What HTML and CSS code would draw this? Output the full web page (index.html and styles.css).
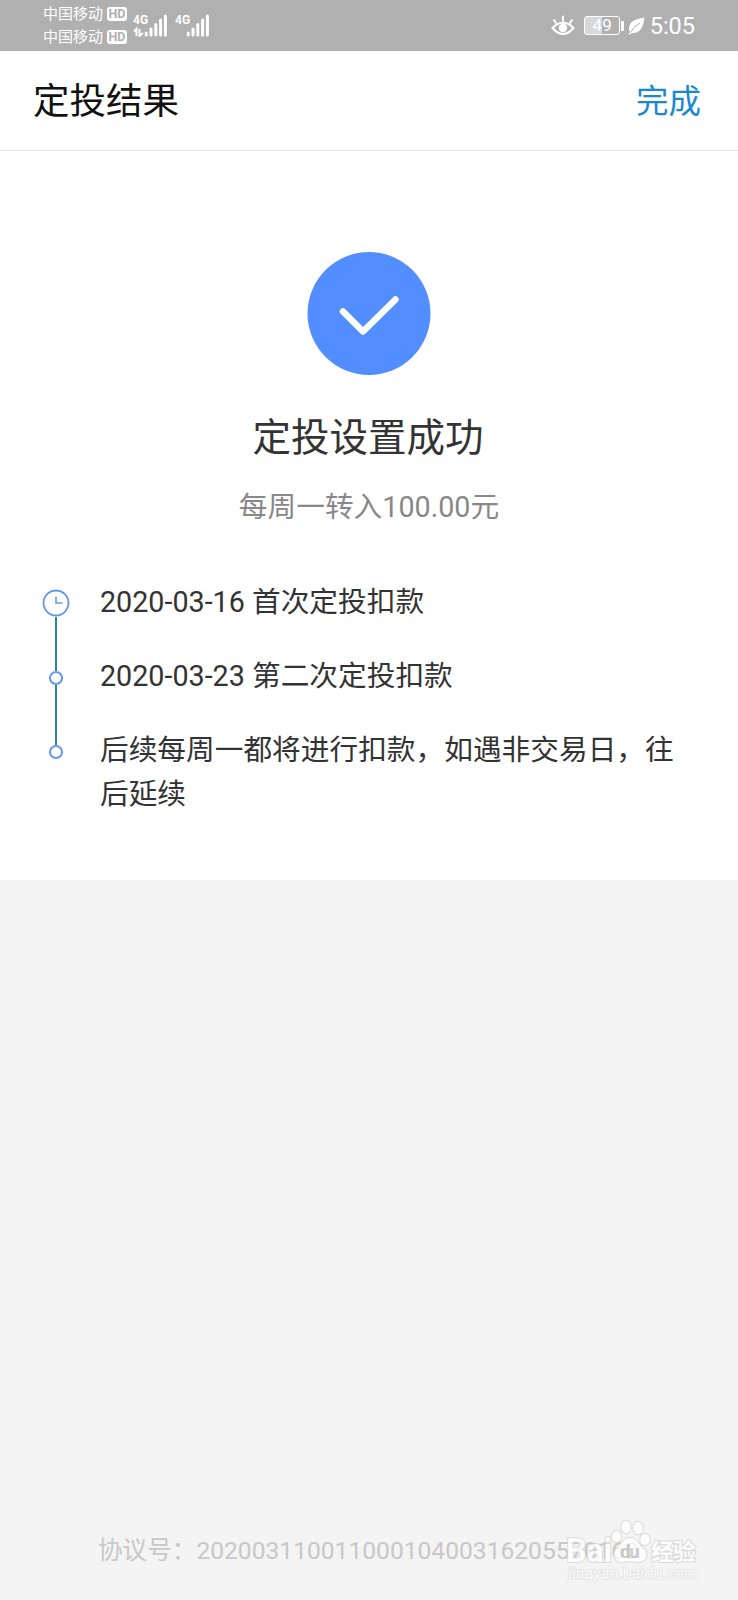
FILE: index.html
```
<!DOCTYPE html>
<html lang="zh-CN">
<head>
  <meta charset="UTF-8">
  <meta name="viewport" content="width=device-width,initial-scale=1.0">
  <title>定投结果</title>
  <link rel="stylesheet" href="styles.css">
</head>
<body>
  <div class="status-bar">
    <div class="carriers">
      <div class="carrier">中国移动<span class="hd">HD</span></div>
      <div class="carrier">中国移动<span class="hd">HD</span></div>
    </div>
    <div class="signal">
      <span class="net">4G</span>
      <svg width="36" height="24" viewBox="0 0 36 24">
        <path d="M1 18.500l2.500-2.500v7M6.500 16v7l3.500-3" fill="none" stroke="#fff" stroke-width="2"/>
        <path d="M13.200 22v-2M18 22v-6M22.800 22v-10.500M27.600 22v-15M32.400 22v-19" stroke="#fff" stroke-width="3" stroke-linecap="round"/>
      </svg>
    </div>
    <div class="signal">
      <span class="net">4G</span>
      <svg width="36" height="24" viewBox="0 0 36 24">
        <path d="M13.200 22v-2M18 22v-6M22.800 22v-10.500M27.600 22v-15M32.400 22v-19" stroke="#fff" stroke-width="3" stroke-linecap="round"/>
      </svg>
    </div>
    <div class="status-right">
      <svg class="eye" width="24" height="21" viewBox="0 0 24 21">
        <path d="M1.500 13Q12 2.500 22.500 13Q12 25 1.500 13Z" fill="none" stroke="#fff" stroke-width="2"/>
        <circle cx="12" cy="13" r="4.200" fill="#fff"/>
        <path d="M12 6V1.500M5 8L3 5M19 8L21 5" stroke="#fff" stroke-width="2" stroke-linecap="round"/>
      </svg>
      <div class="battery">49</div>
      <div class="battery-tip"></div>
      <svg class="leaf" width="17" height="18" viewBox="0 0 17 18">
        <path d="M16.500 0.500C8 2 1 4 1 12Q1 14 2 15L0.500 17L2 17.500L3.500 16C12 17 15.500 10 16.500 0.500Z" fill="#fff"/>
        <path d="M2.500 15.500Q6 9 12 6" fill="none" stroke="#b0b0b0" stroke-width="1"/>
      </svg>
      <span class="time">5:05</span>
    </div>
  </div>

  <div class="header">
    <h1>定投结果</h1>
    <a class="done">完成</a>
  </div>

  <div class="result">
    <svg class="success" width="124" height="124" viewBox="0 0 124 124">
      <circle cx="62" cy="61.500" r="61.500" fill="#528eff"/>
      <path d="M36 59.500L56 79.500L88.500 47.500" fill="none" stroke="#fff" stroke-width="6.500" stroke-linecap="round" stroke-linejoin="round"/>
    </svg>
    <h2>定投设置成功</h2>
    <p class="amount">每周一转入100.00元</p>

    <ul class="timeline">
      <li>
        <div class="marker">
          <svg width="28" height="28" viewBox="0 0 28 28">
            <circle cx="14" cy="14" r="12.500" fill="#fff" stroke="#6398e8" stroke-width="1.800"/>
            <path d="M14 7.500V14H20.500" fill="none" stroke="#6398e8" stroke-width="1.500"/>
          </svg>
          <div class="line"></div>
        </div>
        <p>2020-03-16 首次定投扣款</p>
      </li>
      <li>
        <div class="marker">
          <div class="dot"></div>
          <div class="line"></div>
        </div>
        <p>2020-03-23 第二次定投扣款</p>
      </li>
      <li>
        <div class="marker">
          <div class="dot"></div>
        </div>
        <p>后续每周一都将进行扣款，如遇非交易日，往后延续</p>
      </li>
    </ul>
  </div>

  <div class="agreement">协议号：20200311001100010400316205570160</div>

  <svg class="watermark" width="150" height="70" viewBox="0 0 150 70">
    <g fill="#fff" stroke="#d2d2d2" stroke-width="2" paint-order="stroke">
      <text class="wm-name" x="4" y="46" textLength="46" lengthAdjust="spacingAndGlyphs">Bai</text>
      <ellipse cx="54.500" cy="20.500" rx="4.800" ry="5.800"/>
      <ellipse cx="64" cy="11" rx="4.800" ry="6.200"/>
      <ellipse cx="76" cy="12" rx="4.800" ry="6.200"/>
      <ellipse cx="83" cy="23.500" rx="4.800" ry="5.800"/>
      <path d="M68 22C61 22 60 28 56 31C50 36 51 46 60 46Q68 44.500 76 46C86 46 87 36 80 31C76 28 75 22 68 22Z"/>
      <text class="wm-cn" x="89" y="44" textLength="45">经验</text>
      <text class="wm-url" x="6" y="63" textLength="130">jingyan.baidu.com</text>
    </g>
    <text class="wm-du" x="58" y="42" textLength="20">du</text>
  </svg>
</body>
</html>
```
FILE: styles.css
```
*
{
  box-sizing:border-box;
  margin:0;
  padding:0;
}
body
{
  position:relative;
  display:flex;
  flex-direction:column;
  height:1600px;
  background-color:#f4f4f4;
  color:#333;
  font-family:Roboto,"Noto Sans CJK SC",sans-serif;
}
.status-bar
{
  display:flex;
  height:51px;
  padding:0 43px 0 43px;
  background-color:#b0b0b0;
  color:#fff;
}
.carriers
{
  padding-top:3px;
  margin-right:6px;
}
.carrier
{
  display:flex;
  align-items:center;
  height:22.5px;
  font-size:15px;
  line-height:20px;
}
.hd
{
  width:20px;
  height:14px;
  margin-left:4px;
  border-radius:3px;
  background-color:#fff;
  color:#b0b0b0;
  font-size:12.5px;
  font-weight:bold;
  line-height:14.5px;
  text-align:center;
}
.signal
{
  display:flex;
  flex-direction:column;
  width:42px;
  padding-top:13px;
}
.net
{
  height:0;
  font-size:12px;
  font-weight:bold;
  line-height:14px;
}
.status-right
{
  display:flex;
  align-items:center;
  margin-left:auto;
}
.eye
{
  margin-right:9px;
}
.battery
{
  width:36px;
  height:19px;
  border:1.5px solid #fff;
  border-radius:3px;
  background:linear-gradient(90deg,#d8d8d8 49%,transparent 49%);
  font-size:17px;
  line-height:17px;
  text-align:center;
}
.battery-tip
{
  width:2.5px;
  height:10px;
  margin:0 4px 0 1px;
  background-color:#fff;
}
.leaf
{
  margin-right:5px;
}
.time
{
  padding-top:1px;
  font-size:23.5px;
}
.header
{
  display:flex;
  justify-content:space-between;
  align-items:center;
  height:100px;
  padding:0 37px 4px 33px;
  border-bottom:1px solid #e3e3e3;
  background-color:#fff;
}
h1
{
  color:#111;
  font-size:36.5px;
  font-weight:normal;
}
.done
{
  color:#1b88d2;
  font-size:32.5px;
}
.result
{
  display:flex;
  flex-direction:column;
  align-items:center;
  height:729px;
  padding-top:101px;
  background-color:#fff;
}
h2
{
  margin:33px 2px 0 0;
  font-size:38.5px;
  font-weight:normal;
  line-height:58px;
}
.amount
{
  margin-top:18px;
  color:#888;
  font-size:28.7px;
  line-height:44px;
}
.timeline
{
  align-self:stretch;
  margin-top:52px;
  padding:0 60px 0 42px;
  list-style:none;
}
.timeline li
{
  display:flex;
  min-height:74px;
  font-size:28.7px;
  line-height:43.5px;
}
.marker
{
  display:flex;
  flex-direction:column;
  align-items:center;
  width:28px;
  margin:16px 0 -16px;
}
.marker svg
{
  flex-shrink:0;
  margin-top:-8px;
}
.dot
{
  width:14px;
  height:14px;
  border:2px solid #6398e8;
  border-radius:50%;
}
.line
{
  flex:1;
  width:2px;
  background-color:#2c899f;
}
.timeline p
{
  flex:1;
  margin-left:30px;
}
.agreement
{
  margin-top:auto;
  height:71px;
  padding-left:98px;
  color:#c8c8c8;
  font-size:24.6px;
  line-height:44px;
  white-space:nowrap;
}
.watermark
{
  position:absolute;
  left:562px;
  top:1516px;
  opacity:.75;
}
.wm-name
{
  font-size:33px;
  font-weight:bold;
}
.wm-cn
{
  font-size:23px;
  font-weight:bold;
}
.wm-url
{
  font-size:16px;
  stroke-width:1.2px;
}
.wm-du
{
  fill:#c0c0c0;
  font-size:19px;
  font-weight:bold;
}
```
